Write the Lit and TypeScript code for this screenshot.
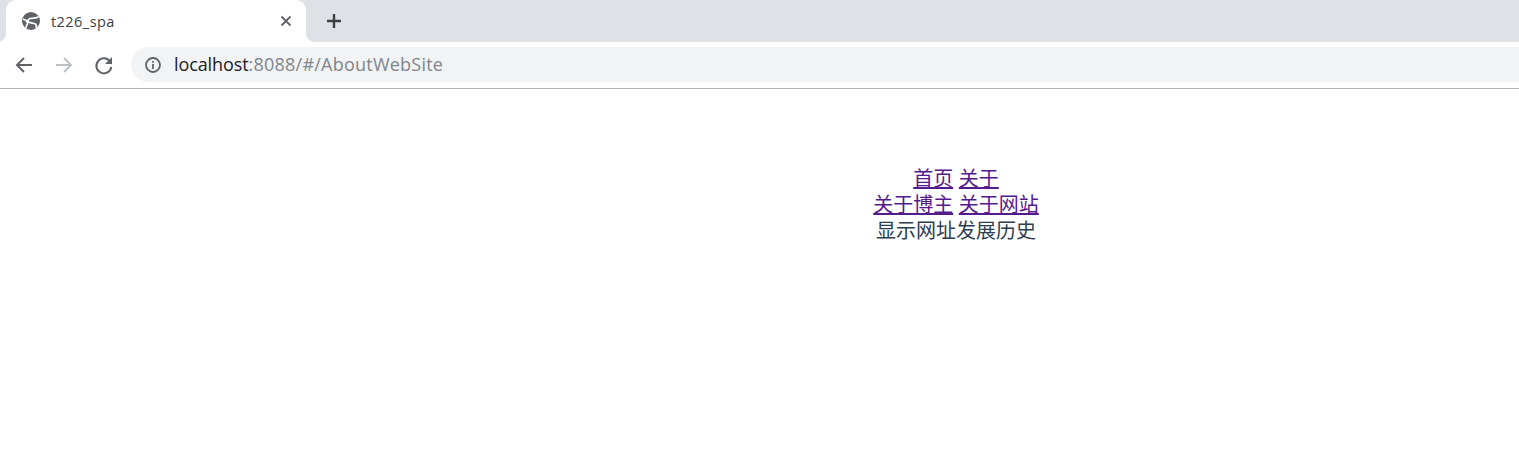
import { LitElement, html, css } from "lit";
import { customElement } from "lit/decorators.js";

@customElement("app-root")
export class AppRoot extends LitElement {
  static styles = css`
    :host { display: block; width: 1519px; height: 451px; background: #fff; overflow: hidden; }
    .strip { height: 42px; background: #dee1e6; display: flex; padding-left: 6px; box-sizing: border-box; }
    .tab { position: relative; width: 300px; height: 42px; background: #fff; border-radius: 10px 10px 0 0; display: flex; align-items: center; padding: 0 12px 0 15px; box-sizing: border-box; }
    .tab::before, .tab::after { content: ""; position: absolute; bottom: 0; width: 8px; height: 8px; background: radial-gradient(circle at var(--c) 0, #dee1e6 7.5px, #fff 8px); }
    .tab::before { left: -8px; --c: 0; }
    .tab::after { right: -8px; --c: 100%; }
    .fav { width: 20px; height: 20px; flex: none; }
    .title { margin-left: 10px; flex: 1; font: 14.500px "Open Sans", sans-serif; letter-spacing: 0.450px; color: #3c4043; }
    .close { width: 16px; height: 16px; flex: none; }
    .plus { width: 20px; height: 20px; margin: 11px 0 0 18px; flex: none; }
    .bar { height: 46px; background: #fff; display: flex; align-items: center; padding: 0 0 1px 13px; box-sizing: border-box; }
    .nav { width: 22px; height: 22px; flex: none; margin-right: 18px; }
    .omni { margin-left: -2px; flex: 1; height: 35px; background: #f1f3f4; border-radius: 18px 0 0 18px; display: flex; align-items: center; padding: 0 0 2px 13px; box-sizing: border-box; font: 18px "Open Sans", sans-serif; letter-spacing: 0.230px; color: #80868b; }
    .info { width: 18px; height: 18px; margin: 2px 12px 0 0; flex: none; }
    .host { color: #202124; letter-spacing: -0.100px; }
    .rule { height: 1px; background: #b4b4b4; }
    .page { padding: 77px 0 0 393px; text-align: center; font: 20px/26px "Liberation Sans", "Noto Sans CJK SC", sans-serif; color: #2c3e50; }
    a { color: #551a8b; text-decoration: underline; text-decoration-thickness: 2px; text-underline-offset: 1px; }
  `;

  render() {
    return html`
      <div class="strip">
        <div class="tab">
          <svg class="fav" viewBox="0 0 20 20"><circle cx="10" cy="10" r="9" fill="#5f6368"/><path d="M17.500 5.500C15 8.500 10 6 7.500 8.500S10 12 13 12.500 15.500 15 15 17M2 8c2 .5 4 1.500 4.500 3.500S5 14 5 17" fill="none" stroke="#fff" stroke-width="1.700"/></svg>
          <span class="title">t226_spa</span>
          <svg class="close" viewBox="0 0 16 16"><path d="M3.500 3.500l9 9M12.500 3.500l-9 9" stroke="#5f6368" stroke-width="1.800" fill="none"/></svg>
        </div>
        <svg class="plus" viewBox="0 0 20 20"><path d="M10 3v14M3 10h14" stroke="#3c4043" stroke-width="2.400" fill="none"/></svg>
      </div>
      <div class="bar">
        <svg class="nav" viewBox="0 0 22 22"><path d="M19 11H4.500M11 4l-7 7 7 7" stroke="#5f6368" stroke-width="2" fill="none"/></svg>
        <svg class="nav" viewBox="0 0 22 22"><path d="M3 11h14.500M11 4l7 7-7 7" stroke="#bdc1c6" stroke-width="2" fill="none"/></svg>
        <svg class="nav" viewBox="0 0 22 22"><path d="M17 7.500A7.500 7.500 0 1 0 18.300 13" stroke="#5f6368" stroke-width="2" fill="none"/><path d="M19 3v7h-7z" fill="#5f6368"/></svg>
        <div class="omni">
          <svg class="info" viewBox="0 0 18 18"><circle cx="9" cy="9" r="7" stroke="#5f6368" stroke-width="1.800" fill="none"/><path d="M9 8v5M9 5v1.800" stroke="#5f6368" stroke-width="1.800" fill="none"/></svg>
          <span><span class="host">localhost</span>:8088/#/AboutWebSite</span>
        </div>
      </div>
      <div class="rule"></div>
      <div class="page">
        <div><a href="#">首页</a> <a href="#">关于</a></div>
        <div><a href="#">关于博主</a> <a href="#">关于网站</a></div>
        <div>显示网址发展历史</div>
      </div>
    `;
  }
}
